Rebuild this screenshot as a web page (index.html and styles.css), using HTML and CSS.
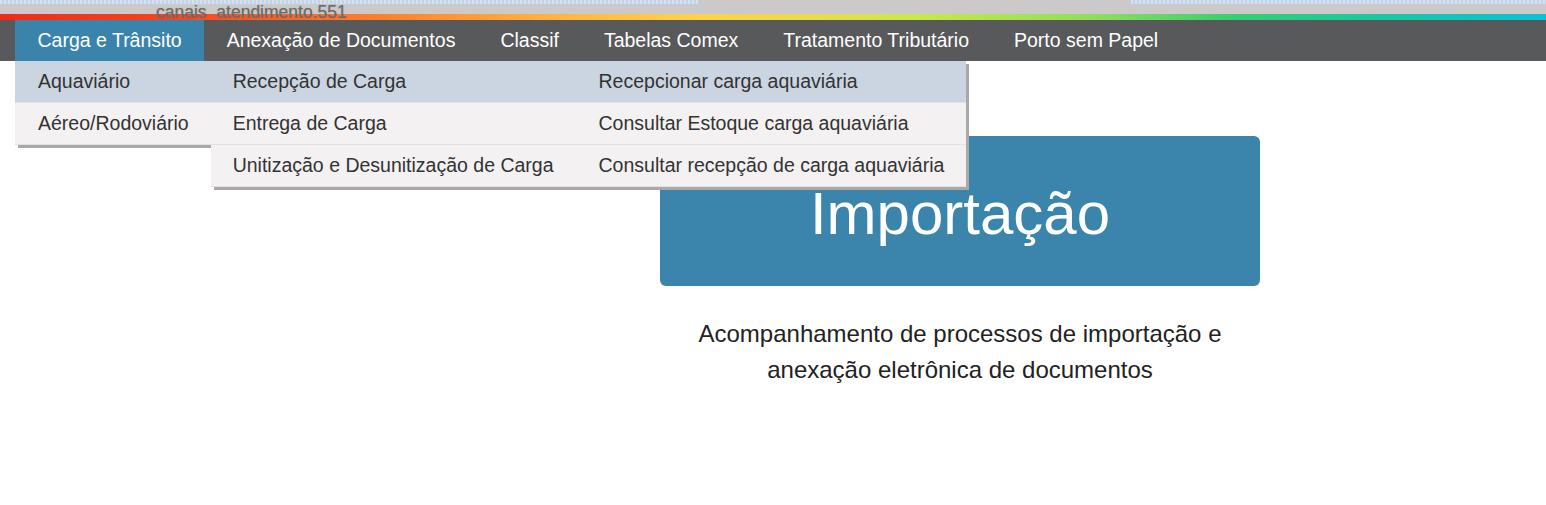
FILE: index.html
```html
<!DOCTYPE html>
<html lang="pt-BR">
<head>
<meta charset="utf-8">
<title>Portal Único</title>
<link rel="stylesheet" href="styles.css">
</head>
<body>
<header class="topbar">
  <div class="dots">
    <span class="dots-a"></span>
    <span class="dots-gap"></span>
    <span class="dots-b"></span>
  </div>
  <span class="host">canais_atendimento.551</span>
</header>
<div class="stripe"></div>
<nav class="nav">
  <ul class="menu">
    <li class="menu-item active">
      <a class="menu-link">Carga e Trânsito</a>
      <ul class="sub level1">
        <li class="sub-item hover">
          <a class="sub-link">Aquaviário</a>
          <ul class="sub level2">
            <li class="sub-item hover">
              <a class="sub-link">Recepção de Carga</a>
              <ul class="sub level3">
                <li class="sub-item hover"><a class="sub-link">Recepcionar carga aquaviária</a></li>
                <li class="sub-item"><a class="sub-link">Consultar Estoque carga aquaviária</a></li>
                <li class="sub-item"><a class="sub-link">Consultar recepção de carga aquaviária</a></li>
              </ul>
            </li>
            <li class="sub-item"><a class="sub-link">Entrega de Carga</a></li>
            <li class="sub-item"><a class="sub-link">Unitização e Desunitização de Carga</a></li>
          </ul>
        </li>
        <li class="sub-item"><a class="sub-link">Aéreo/Rodoviário</a></li>
      </ul>
    </li>
    <li class="menu-item"><a class="menu-link">Anexação de Documentos</a></li>
    <li class="menu-item"><a class="menu-link">Classif</a></li>
    <li class="menu-item"><a class="menu-link">Tabelas Comex</a></li>
    <li class="menu-item"><a class="menu-link">Tratamento Tributário</a></li>
    <li class="menu-item"><a class="menu-link">Porto sem Papel</a></li>
  </ul>
</nav>
<main class="main">
  <section class="module">
    <div class="card">Importação</div>
    <p class="desc">Acompanhamento de processos de importação e anexação eletrônica de documentos</p>
  </section>
</main>
</body>
</html>
```

FILE: styles.css
```css
* { box-sizing: border-box; }

html, body {
  margin: 0;
  padding: 0;
  background: #ffffff;
  font-family: "Liberation Sans", Arial, sans-serif;
}

.topbar {
  position: relative;
  height: 14px;
  background: #cbc9c9;
}

.dots {
  display: flex;
  height: 4px;
}

.dots-a, .dots-b {
  display: block;
  height: 4px;
  background-color: #c6d7ec;
  background-image: repeating-linear-gradient(90deg, #d4e1f1 0 2px, #c3d4ea 2px 4px);
}

.dots-a { width: 698px; }
.dots-gap { flex: 1; }
.dots-b { width: 415px; }

.host {
  position: absolute;
  left: 156px;
  top: 2px;
  font-size: 17.5px;
  line-height: 20px;
  color: #6c6c6c;
  text-shadow: 0 0 1px rgba(90, 90, 90, 0.5);
  white-space: nowrap;
}

.stripe {
  height: 6px;
  background: linear-gradient(90deg,
    #ee2a1a 0px,
    #f5431f 160px,
    #fb7a2e 360px,
    #ffb542 560px,
    #fed24d 700px,
    #dfe04f 850px,
    #c6e84c 920px,
    #8edc5c 1100px,
    #33cd74 1240px,
    #1ac7a3 1380px,
    #0bc1d8 1546px);
}

.nav {
  position: relative;
  z-index: 5;
  height: 41px;
  background: #58595b;
}

.menu {
  display: flex;
  margin: 0;
  padding: 0 0 0 15px;
  list-style: none;
}

.menu-item {
  position: relative;
}

.menu-link {
  display: block;
  padding: 0 22.5px;
  height: 41px;
  line-height: 41px;
  font-size: 19.5px;
  color: #ffffff;
  white-space: nowrap;
}

.menu-item.active > .menu-link {
  background: #3a84ab;
}

.sub {
  position: absolute;
  margin: 0;
  padding: 0;
  list-style: none;
  background: #f3f1f2;
  box-shadow: 3px 3px 0 #a9a9a9;
}

.level1 { top: 100%; left: 0; }
.level2, .level3 { top: 0; left: 100%; }

.sub-item {
  position: relative;
  background: #f3f1f2;
  border-bottom: 1px solid #e2e0e1;
}

.sub-item.hover {
  background: #cbd5e1;
}

.sub-link {
  display: block;
  height: 41px;
  line-height: 41px;
  font-size: 19.5px;
  color: #333333;
  white-space: nowrap;
  padding: 0 22px;
}

.level1 > .sub-item > .sub-link { padding: 0 22px 0 23px; }
.level3 > .sub-item > .sub-link { padding: 0 22px 0 23px; }

.main {
  display: flex;
  justify-content: flex-end;
  padding-right: 286px;
}

.module {
  width: 600px;
  margin-top: 75px;
}

.card {
  display: flex;
  align-items: center;
  justify-content: center;
  height: 150px;
  padding-top: 4px;
  border-radius: 6px;
  background: #3b85ac;
  color: #ffffff;
  font-size: 60px;
}

.desc {
  margin: 30px 0 0;
  text-align: center;
  font-size: 24px;
  line-height: 36px;
  color: #222222;
}
```
